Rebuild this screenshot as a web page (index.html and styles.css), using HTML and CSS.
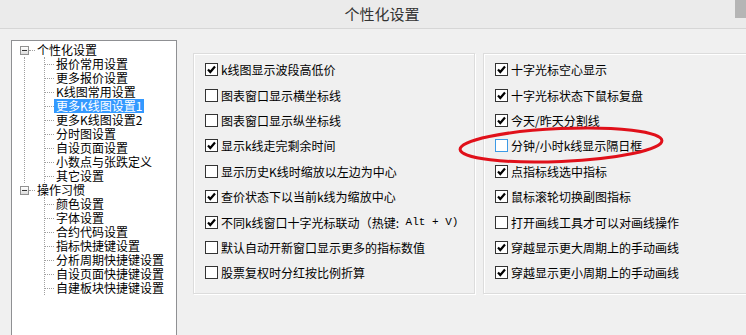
FILE: index.html
```html
<!DOCTYPE html>
<html>
	<head>
		<meta charset="utf-8">
		<title>个性化设置</title>
		<link rel="stylesheet" href="styles.css">
	</head>
	<body>
		<header class="titlebar">
			<h1>个性化设置</h1>
			<div class="grip"></div>
		</header>
		<section class="content">
			<div class="tree">
				<div class="root">
					<div class="row"><span class="toggle"></span><span class="stub"></span><span class="label">个性化设置</span></div>
					<div class="branch">
						<ul class="children">
							<li class="row"><span class="elbow"></span><span class="label">报价常用设置</span></li>
							<li class="row"><span class="elbow"></span><span class="label">更多报价设置</span></li>
							<li class="row"><span class="elbow"></span><span class="label">K线图常用设置</span></li>
							<li class="row"><span class="elbow"></span><span class="label selected">更多K线图设置1</span></li>
							<li class="row"><span class="elbow"></span><span class="label">更多K线图设置2</span></li>
							<li class="row"><span class="elbow"></span><span class="label">分时图设置</span></li>
							<li class="row"><span class="elbow"></span><span class="label">自设页面设置</span></li>
							<li class="row"><span class="elbow"></span><span class="label">小数点与张跌定义</span></li>
							<li class="row"><span class="elbow"></span><span class="label">其它设置</span></li>
						</ul>
					</div>
				</div>
				<div class="root last">
					<div class="row"><span class="toggle"></span><span class="stub"></span><span class="label">操作习惯</span></div>
					<div class="branch">
						<ul class="children">
							<li class="row"><span class="elbow"></span><span class="label">颜色设置</span></li>
							<li class="row"><span class="elbow"></span><span class="label">字体设置</span></li>
							<li class="row"><span class="elbow"></span><span class="label">合约代码设置</span></li>
							<li class="row"><span class="elbow"></span><span class="label">指标快捷键设置</span></li>
							<li class="row"><span class="elbow"></span><span class="label">分析周期快捷键设置</span></li>
							<li class="row"><span class="elbow"></span><span class="label">自设页面快捷键设置</span></li>
							<li class="row"><span class="elbow"></span><span class="label">自建板块快捷键设置</span></li>
						</ul>
					</div>
				</div>
			</div>

			<div class="groups">
				<div class="group left">
					<label class="opt"><span class="cb on"><svg viewBox="0 0 11 11"><polyline points="2,5.5 4.3,8 9,2.5"/></svg></span>k线图显示波段高低价</label>
					<label class="opt"><span class="cb"></span>图表窗口显示横坐标线</label>
					<label class="opt"><span class="cb"></span>图表窗口显示纵坐标线</label>
					<label class="opt"><span class="cb on"><svg viewBox="0 0 11 11"><polyline points="2,5.5 4.3,8 9,2.5"/></svg></span>显示k线走完剩余时间</label>
					<label class="opt"><span class="cb"></span>显示历史K线时缩放以左边为中心</label>
					<label class="opt"><span class="cb on"><svg viewBox="0 0 11 11"><polyline points="2,5.5 4.3,8 9,2.5"/></svg></span>查价状态下以当前k线为缩放中心</label>
					<label class="opt"><span class="cb on"><svg viewBox="0 0 11 11"><polyline points="2,5.5 4.3,8 9,2.5"/></svg></span>不同k线窗口十字光标联动（热键:<span class="mono">&nbsp;Alt + V)</span></label>
					<label class="opt"><span class="cb"></span>默认自动开新窗口显示更多的指标数值</label>
					<label class="opt"><span class="cb"></span>股票复权时分红按比例折算</label>
				</div>
				<div class="group right">
					<label class="opt"><span class="cb on"><svg viewBox="0 0 11 11"><polyline points="2,5.5 4.3,8 9,2.5"/></svg></span>十字光标空心显示</label>
					<label class="opt"><span class="cb on"><svg viewBox="0 0 11 11"><polyline points="2,5.5 4.3,8 9,2.5"/></svg></span>十字光标状态下鼠标复盘</label>
					<label class="opt"><span class="cb on"><svg viewBox="0 0 11 11"><polyline points="2,5.5 4.3,8 9,2.5"/></svg></span>今天/昨天分割线</label>
					<label class="opt"><span class="cb hover"></span>分钟/小时k线显示隔日框</label>
					<label class="opt"><span class="cb on"><svg viewBox="0 0 11 11"><polyline points="2,5.5 4.3,8 9,2.5"/></svg></span>点指标线选中指标</label>
					<label class="opt"><span class="cb on"><svg viewBox="0 0 11 11"><polyline points="2,5.5 4.3,8 9,2.5"/></svg></span>鼠标滚轮切换副图指标</label>
					<label class="opt"><span class="cb"></span>打开画线工具才可以对画线操作</label>
					<label class="opt"><span class="cb on"><svg viewBox="0 0 11 11"><polyline points="2,5.5 4.3,8 9,2.5"/></svg></span>穿越显示更大周期上的手动画线</label>
					<label class="opt"><span class="cb on"><svg viewBox="0 0 11 11"><polyline points="2,5.5 4.3,8 9,2.5"/></svg></span>穿越显示更小周期上的手动画线</label>
				</div>
			</div>
		</section>

		<svg class="mark" width="220" height="50" viewBox="0 0 220 50">
			<ellipse cx="106" cy="22" rx="101" ry="16.5" transform="rotate(-2.5 106 22)"/>
		</svg>
	</body>
</html>
```

FILE: styles.css
```css
html, body {
	height: 100%;
}

body {
	margin: 0;
	padding: 0;
	position: relative;
	overflow: hidden;
	display: flex;
	flex-direction: column;
	background-color: #f0f0f0;
	color: #000;
	font-family: "Noto Sans CJK SC", "Liberation Sans", sans-serif;
	font-size: 12px;
}

.titlebar {
	display: flex;
	flex-shrink: 0;
	height: 28px;
	background-color: #ebebeb;
	border-bottom: 1px solid #d6d6d6;
}

.titlebar h1 {
	flex: 1;
	margin: 0;
	padding-left: 29px;
	text-align: center;
	font-size: 15px;
	font-weight: normal;
	line-height: 27px;
	color: #333;
}

.titlebar .grip {
	width: 11px;
	height: 18px;
	background-color: #b5b5b5;
}

.content {
	display: flex;
	flex: 1;
	min-height: 0;
	align-items: flex-start;
	gap: 16px;
	padding: 11px 0 0 11px;
}

/* tree */

.tree {
	box-sizing: border-box;
	flex-shrink: 0;
	width: 166px;
	height: 300px;
	padding: 2px 0 0 8px;
	background-color: #fff;
	border: 1px solid #8f9093;
	border-bottom: none;
}

.row {
	display: flex;
	align-items: center;
	height: 14px;
	white-space: nowrap;
}

.toggle {
	box-sizing: border-box;
	position: relative;
	width: 9px;
	height: 9px;
	border: 1px solid #919191;
	background: linear-gradient(#fff, #dcdcdc);
}

.toggle::after {
	content: "";
	position: absolute;
	left: 1px;
	top: 3px;
	width: 5px;
	height: 1px;
	background-color: #333;
}

.stub {
	width: 6px;
	border-top: 1px dotted #a0a0a0;
}

.label {
	padding: 0 2px;
	line-height: 14px;
}

.label.selected {
	background-color: #3399ff;
	color: #fff;
}

.branch {
	margin-left: 4px;
	padding-left: 19px;
	border-left: 1px dotted #a0a0a0;
}

.root.last .branch {
	border-left-color: transparent;
}

.children {
	margin: 0;
	padding: 0;
	list-style: none;
	border-left: 1px dotted #a0a0a0;
}

.elbow {
	width: 9px;
	border-top: 1px dotted #a0a0a0;
}

/* option groups */

.groups {
	display: flex;
	gap: 8px;
	margin-top: 13px;
}

.group {
	box-sizing: border-box;
	display: flex;
	flex-direction: column;
	height: 241px;
	padding: 3px 0 0 11px;
	border: 1px solid #dcdcdc;
	box-shadow: inset 1px 1px 0 #fff, 1px 1px 0 #fff;
}

.group.left {
	width: 282px;
}

.group.right {
	width: 264px;
	border-right: none;
}

.opt {
	display: flex;
	align-items: center;
	height: 25.4px;
	white-space: nowrap;
}

.cb {
	box-sizing: border-box;
	display: flex;
	flex-shrink: 0;
	width: 13px;
	height: 13px;
	margin-right: 3px;
	padding: 0;
	background-color: #fff;
	border: 1px solid #333;
}

.cb.hover {
	border-color: #3c9ae6;
}

.cb svg {
	width: 11px;
	height: 11px;
}

.cb polyline {
	fill: none;
	stroke: #000;
	stroke-width: 2.2;
}

.mono {
	font-family: "Liberation Mono", monospace;
	font-size: 11px;
}

/* red hand-drawn marker */

.mark {
	position: absolute;
	left: 455px;
	top: 123px;
}

.mark ellipse {
	fill: none;
	stroke: #e0101a;
	stroke-width: 3;
}
```
